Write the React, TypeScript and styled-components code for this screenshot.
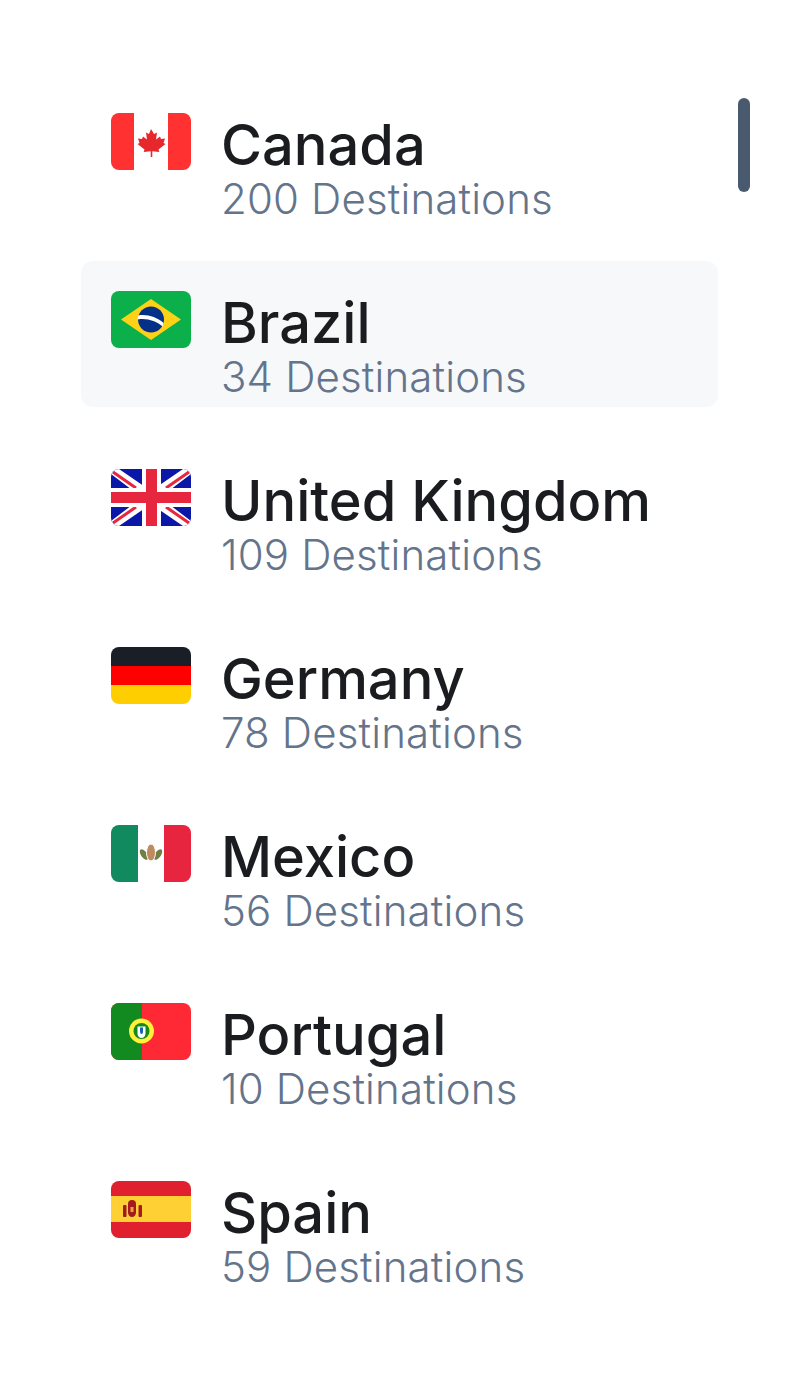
import styled, { createGlobalStyle } from "styled-components";
import type { ReactNode } from "react";

const GlobalStyle = createGlobalStyle`
  html, body {
    margin: 0;
    padding: 0;
    background: #fff;
  }
`;

const Page = styled.div`
  position: relative;
  width: 800px;
  height: 1378px;
  padding: 83px 82px 0 81px;
  box-sizing: border-box;
  font-family: Inter, "Noto Sans", sans-serif;
`;

const List = styled.ul`
  display: flex;
  flex-direction: column;
  gap: 32px;
  margin: 0;
  padding: 0;
  list-style: none;
`;

const Row = styled.li<{ $active?: boolean }>`
  display: flex;
  gap: 30px;
  height: 146px;
  padding: 30px;
  box-sizing: border-box;
  border-radius: 12px;
  background: ${(p) => (p.$active ? "#f6f8fa" : "transparent")};
`;

const FlagBox = styled.div`
  flex: none;
  width: 80px;
  height: 57px;
  border-radius: 8px;
  overflow: hidden;

  svg {
    display: block;
  }
`;

const Info = styled.div`
  display: flex;
  flex-direction: column;
`;

const Name = styled.div`
  font-size: 56px;
  font-weight: 550;
  line-height: 64px;
  white-space: nowrap;
  color: #1a1c1f;
`;

const Count = styled.div`
  font-size: 42px;
  font-weight: 300;
  line-height: 44px;
  letter-spacing: 0.15px;
  white-space: nowrap;
  color: #64748b;
`;

const ScrollThumb = styled.div`
  position: absolute;
  top: 98px;
  left: 738px;
  width: 12px;
  height: 94px;
  border-radius: 6px;
  background: #4a5a6e;
`;

const Flag = ({ children }: { children: ReactNode }) => (
  <FlagBox>
    <svg width="80" height="57" viewBox="0 0 80 57">
      {children}
    </svg>
  </FlagBox>
);

const countries = [
  {
    name: "Canada",
    count: 200,
    flag: (
      <>
        <rect width="80" height="57" fill="#fff" />
        <rect width="23" height="57" fill="#ff3131" />
        <rect x="57" width="23" height="57" fill="#ff3131" />
        <path
          d="M40 16l3 5 3-1.500-1 7 4-3 1 2.500 4-.5-1.500 4.500 2 1-7 5.500.8 2.500-7-.8V44h-1.600v-5.800l-7 .8.8-2.500-7-5.500 2-1-1.500-4.500 4 .5 1-2.500 4 3-1-7 3 1.500z"
          fill="#e6282d"
        />
      </>
    ),
  },
  {
    name: "Brazil",
    count: 34,
    active: true,
    flag: (
      <>
        <rect width="80" height="57" fill="#0bb04b" />
        <path d="M40 8l30 20.500L40 49 10 28.500z" fill="#fdd216" />
        <circle cx="40" cy="28.500" r="13" fill="#053087" />
        <path d="M27.200 24.500c9-1.500 18 1.500 25.400 7.500l-1 3.500c-7-5.500-15-8.500-25-7z" fill="#fff" />
      </>
    ),
  },
  {
    name: "United Kingdom",
    count: 109,
    flag: (
      <>
        <rect width="80" height="57" fill="#0a17a7" />
        <path d="M0 0h8l32 22L72 0h8v5L49 28.500 80 52v5h-8L40 35 8 57H0v-5l31-23.500L0 5z" fill="#fff" />
        <path
          d="M2 3l23 16M78 3L55 19M2 54l23-16M78 54L55 38"
          stroke="#e6273e"
          strokeWidth="3"
          fill="none"
        />
        <rect x="31" width="19" height="57" fill="#fff" />
        <rect y="19" width="80" height="19" fill="#fff" />
        <rect x="35" width="11" height="57" fill="#e6273e" />
        <rect y="23" width="80" height="11" fill="#e6273e" />
      </>
    ),
  },
  {
    name: "Germany",
    count: 78,
    flag: (
      <>
        <rect width="80" height="19" fill="#1a1f27" />
        <rect y="19" width="80" height="19" fill="#f00" />
        <rect y="38" width="80" height="19" fill="#ffce00" />
      </>
    ),
  },
  {
    name: "Mexico",
    count: 56,
    flag: (
      <>
        <rect width="80" height="57" fill="#fff" />
        <rect width="27" height="57" fill="#128a60" />
        <rect x="53" width="27" height="57" fill="#e8253f" />
        <ellipse cx="33" cy="29.500" rx="3" ry="6" transform="rotate(-35 33 29.500)" fill="#6f7f45" />
        <ellipse cx="47" cy="29.500" rx="3" ry="6" transform="rotate(35 47 29.500)" fill="#6f7f45" />
        <ellipse cx="40" cy="27.500" rx="4.500" ry="8.500" fill="#c08a5f" stroke="#fff" strokeWidth="1" />
      </>
    ),
  },
  {
    name: "Portugal",
    count: 10,
    flag: (
      <>
        <rect width="80" height="57" fill="#ff2936" />
        <rect width="31" height="57" fill="#128a1f" />
        <circle cx="30.500" cy="28" r="12.500" fill="#fff03a" />
        <circle cx="30.500" cy="28" r="8" fill="#128a1f" />
        <path d="M26.500 23.500h8v7a4 4.500 0 0 1-8 0z" fill="#fff" />
        <path d="M29 24.500h3v4a1.500 2.500 0 0 1-3 0z" fill="#1d5fb0" />
      </>
    ),
  },
  {
    name: "Spain",
    count: 59,
    flag: (
      <>
        <rect width="80" height="57" fill="#e0202f" />
        <rect y="15" width="80" height="26" fill="#ffd033" />
        <rect x="12" y="24" width="3.500" height="12" rx="1" fill="#a41a1f" />
        <rect x="27.500" y="24" width="3.500" height="12" rx="1" fill="#a41a1f" />
        <path d="M17 23a4 4 0 0 1 8 0v8.500a4 4.500 0 0 1-8 0z" fill="#a41a1f" />
        <rect x="19.500" y="26" width="3" height="5" fill="#e8a53a" />
      </>
    ),
  },
];

export default function App() {
  return (
    <Page>
      <GlobalStyle />
      <List>
        {countries.map((c) => (
          <Row key={c.name} $active={c.active}>
            <Flag>{c.flag}</Flag>
            <Info>
              <Name>{c.name}</Name>
              <Count>{c.count} Destinations</Count>
            </Info>
          </Row>
        ))}
      </List>
      <ScrollThumb />
    </Page>
  );
}
